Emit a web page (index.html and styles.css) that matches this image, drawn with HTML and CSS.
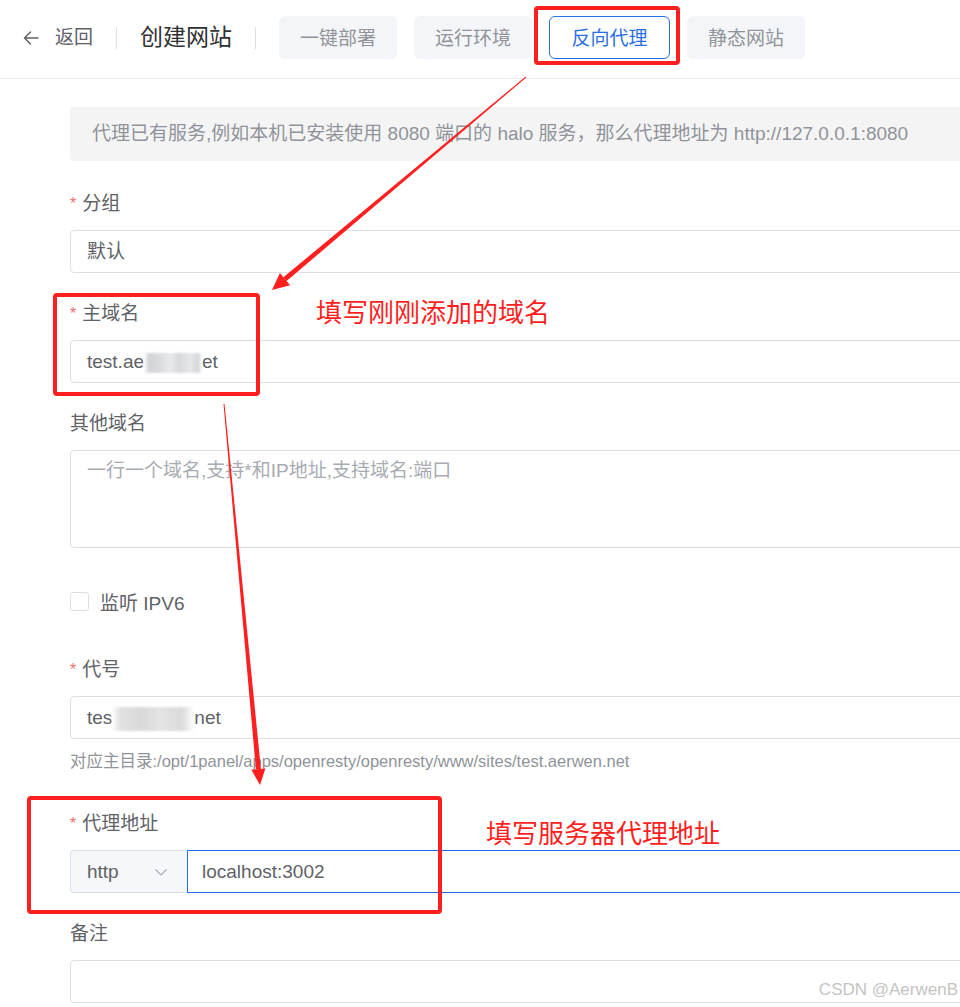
FILE: index.html
```html
<!DOCTYPE html>
<html>
<head>
    <title>创建网站</title>
    <link rel="stylesheet" href="styles.css">
</head>
<body>
    <div class="page">
        <header class="topbar">
            <a class="back">
                <svg class="back-icon" width="18" height="18" viewBox="0 0 18 18">
                    <path d="M16 9H2.5M8.5 3L2.5 9l6 6" fill="none" stroke="#606266" stroke-width="1.5" stroke-linecap="round" stroke-linejoin="round"/>
                </svg>
                返回
            </a>
            <span class="divider"></span>
            <h1 class="title">创建网站</h1>
            <span class="divider"></span>
            <nav class="tabs">
                <button class="tab">一键部署</button>
                <button class="tab">运行环境</button>
                <button class="tab tab--active">反向代理</button>
                <button class="tab">静态网站</button>
            </nav>
        </header>

        <main class="form">
            <div class="alert">代理已有服务,例如本机已安装使用 8080 端口的 halo 服务，那么代理地址为 http://127.0.0.1:8080</div>

            <div class="form-item">
                <div class="label required">分组</div>
                <div class="input">默认</div>
            </div>

            <div class="form-item">
                <div class="label required">主域名</div>
                <div class="input">test.ae<span class="blur blur--domain"></span>et</div>
            </div>

            <div class="form-item">
                <div class="label">其他域名</div>
                <div class="textarea placeholder">一行一个域名,支持*和IP地址,支持域名:端口</div>
            </div>

            <div class="form-item form-item--check">
                <span class="checkbox"></span>
                <span class="check-label">监听 IPV6</span>
            </div>

            <div class="form-item form-item--help">
                <div class="label required">代号</div>
                <div class="input">tes<span class="blur blur--alias"></span>net</div>
                <div class="help">对应主目录:/opt/1panel/apps/openresty/openresty/www/sites/test.aerwen.net</div>
            </div>

            <div class="form-item">
                <div class="label required">代理地址</div>
                <div class="input-group">
                    <div class="select">
                        http
                        <svg width="14" height="14" viewBox="0 0 14 14">
                            <path d="M1.5 4.5L7 10l5.5-5.5" fill="none" stroke="#a8abb2" stroke-width="1.2"/>
                        </svg>
                    </div>
                    <div class="input input--focus">localhost:3002</div>
                </div>
            </div>

            <div class="form-item">
                <div class="label">备注</div>
                <div class="input"></div>
            </div>
        </main>

        <!-- annotations drawn over the screenshot -->
        <div class="annotations">
            <div class="mark mark--tab"></div>
            <div class="mark mark--domain"></div>
            <div class="mark mark--proxy"></div>
            <div class="note note--domain">填写刚刚添加的域名</div>
            <div class="note note--proxy">填写服务器代理地址</div>
            <svg class="arrows" width="960" height="1007" viewBox="0 0 960 1007">
                <polygon points="525.7,76.6 526.3,77.4 286.6,281 283.4,277.2" fill="#ff1f1f"/>
                <polygon points="272,290 290.1,285.2 279.9,273" fill="#ff1f1f"/>
                <polygon points="223.5,404 224.5,404 260.9,768.9 255.9,769.4" fill="#ff1f1f"/>
                <polygon points="260,785 265.4,768.4 251.4,769.8" fill="#ff1f1f"/>
            </svg>
        </div>

        <div class="watermark">CSDN @AerwenB</div>
    </div>
</body>
</html>
```

FILE: styles.css
```css
html, body {
    margin: 0;
    padding: 0;
    background: #fff;
}
body {
    width: 960px;
    height: 1007px;
    overflow: hidden;
    font-family: "Liberation Sans", "Noto Sans CJK SC", sans-serif;
    font-size: 19px;
    color: #606266;
}
.page {
    position: relative;
    width: 960px;
    height: 1007px;
    overflow: hidden;
}

/* Top bar */
.topbar {
    display: flex;
    align-items: center;
    height: 43px;
    padding: 16px 0 19px 22px;
    border-bottom: 1px solid #ebeef5;
}
.back {
    display: flex;
    align-items: center;
    gap: 15px;
    color: #606266;
    font-size: 19px;
    line-height: 24px;
}
.divider {
    width: 1px;
    height: 22px;
    background: #dcdfe6;
    margin: 0 23px;
}
.title {
    margin: 0;
    font-size: 23px;
    line-height: 28px;
    padding-bottom: 1px;
    font-weight: normal;
    color: #303133;
}
.tabs {
    display: flex;
    gap: 17px;
}
.tab {
    box-sizing: border-box;
    height: 43px;
    width: 118px;
    padding: 2px 0 0;
    border: none;
    border-radius: 6px;
    background: #f4f5f8;
    color: #909399;
    font-family: inherit;
    font-size: 19px;
    line-height: 24px;
}
.tab--active {
    width: 121px;
    border: 1px solid #2a6ee6;
    background: #fff;
    color: #2a6ee6;
}

/* Form */
.form {
    width: 1000px;
    padding: 28px 0 0 70px;
}
.alert {
    height: 54px;
    line-height: 54px;
    padding-left: 22px;
    margin-bottom: 25px;
    background: #f4f4f5;
    border-radius: 4px;
    color: #909399;
    white-space: nowrap;
}
.form-item {
    margin-bottom: 23px;
}
.label {
    line-height: 32px;
    padding-top: 2px;
    margin-bottom: 10px;
    color: #606266;
}
.required::before {
    content: "*";
    color: #f56c6c;
    font-size: 16px;
    margin-right: 6px;
    vertical-align: top;
}
.input {
    box-sizing: border-box;
    height: 43px;
    line-height: 41px;
    padding-left: 16px;
    border: 1px solid #dcdfe6;
    border-radius: 4px;
    color: #606266;
}
.input--focus {
    flex: 1;
    border: 1px solid #1a6cea;
    border-radius: 0 4px 4px 0;
    padding-left: 14px;
}
.textarea {
    box-sizing: border-box;
    height: 98px;
    padding: 7px 16px;
    line-height: 26px;
    border: 1px solid #dcdfe6;
    border-radius: 4px;
}
.placeholder {
    color: #a8abb2;
}
.blur {
    display: inline-block;
    vertical-align: middle;
    filter: blur(1px);
}
.blur--domain {
    width: 58px;
    height: 20px;
    background: linear-gradient(to right, #fff 0, #d2d4d8 8%, #dcdde0 30%, #e9eaec 45%, #d8d9dc 60%, #e6e7e9 80%, #d5d6d9 94%, #fff 100%);
}
.blur--alias {
    width: 82px;
    height: 24px;
    background: linear-gradient(to right, #fff 0, #e2e2e2 10%, #d9d9d9 35%, #e4e4e4 60%, #dadada 85%, #fff 100%);
}
.form-item--check {
    display: flex;
    align-items: center;
    height: 43px;
    padding-top: 9px;
    margin-bottom: 29px;
}
.checkbox {
    box-sizing: border-box;
    width: 19px;
    height: 19px;
    border: 1px solid #dcdfe6;
    border-radius: 3px;
    margin-right: 11px;
}
.form-item--help {
    margin-bottom: 34px;
}
.help {
    margin-top: 11px;
    line-height: 22px;
    font-size: 16.5px;
    color: #909399;
}
.input-group {
    display: flex;
    height: 43px;
}
.select {
    box-sizing: border-box;
    display: flex;
    align-items: center;
    justify-content: space-between;
    width: 117px;
    height: 43px;
    padding: 0 19px 0 16px;
    background: #f5f7fa;
    border: 1px solid #dcdfe6;
    border-right: none;
    border-radius: 4px 0 0 4px;
    color: #606266;
}

/* Red annotations */
.annotations {
    position: absolute;
    top: 0;
    left: 0;
    width: 960px;
    height: 1007px;
    pointer-events: none;
}
.mark {
    position: absolute;
    box-sizing: border-box;
    border: 4px solid #ff1f1f;
    border-radius: 4px;
}
.mark--tab {
    left: 534px;
    top: 6px;
    width: 146px;
    height: 59px;
}
.mark--domain {
    left: 53px;
    top: 293px;
    width: 207px;
    height: 103px;
}
.mark--proxy {
    left: 27px;
    top: 796px;
    width: 415px;
    height: 118px;
}
.note {
    position: absolute;
    font-family: "Noto Sans CJK SC", sans-serif;
    font-size: 26px;
    line-height: 34px;
    color: #ff1f1f;
}
.note--domain {
    left: 316px;
    top: 294px;
}
.note--proxy {
    left: 486px;
    top: 815px;
}
.arrows {
    position: absolute;
    top: 0;
    left: 0;
}
.watermark {
    position: absolute;
    right: 2px;
    bottom: 7px;
    font-size: 17px;
    color: #c4c4c4;
}
```
